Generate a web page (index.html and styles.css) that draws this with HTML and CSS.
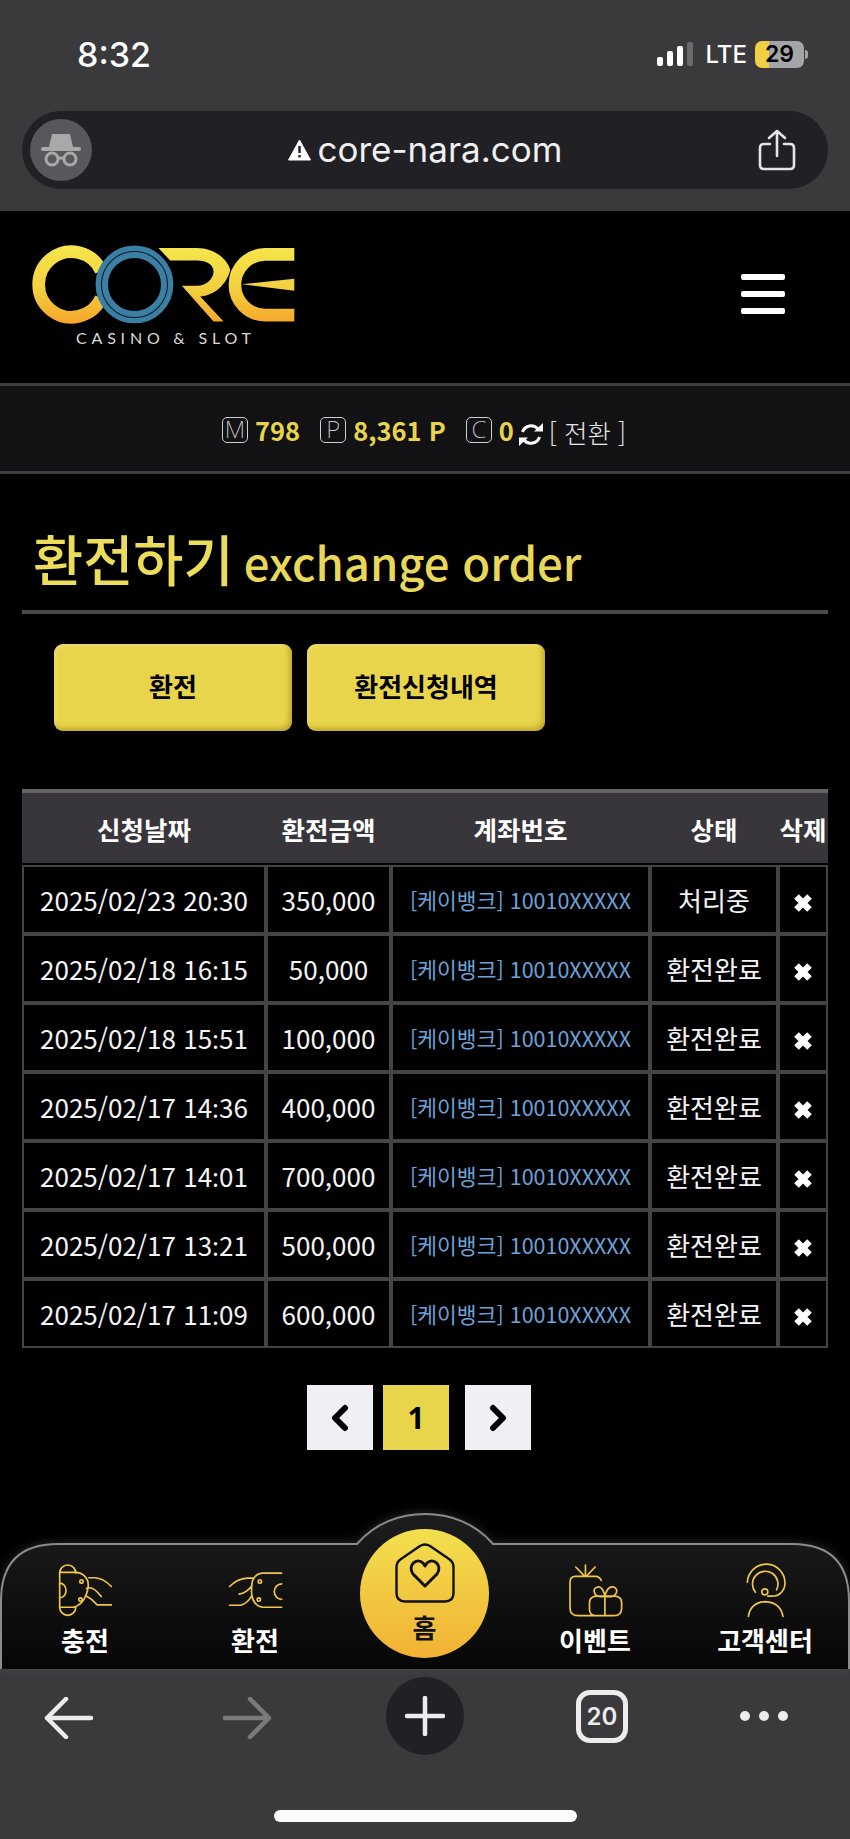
FILE: index.html
```html
<!DOCTYPE html>
<html lang="ko">
<head>
    <meta charset="UTF-8">
    <meta name="viewport" content="width=device-width, initial-scale=1.0">
    <title>core-nara.com</title>
    <link rel="stylesheet" href="styles.css">
</head>
<body>
<div class="phone">
    <div class="browser-top">
        <div class="status">
            <span class="clock">8:32</span>
            <div class="status-right">
                <div class="signal"><i></i><i></i><i></i><i class="off"></i></div>
                <span class="lte">LTE</span>
                <div class="battery"><span>29</span></div>
                <div class="battery-cap"></div>
            </div>
        </div>
        <div class="address">
            <div class="incognito">
                <svg width="42" height="38" viewBox="0 0 42 38" fill="none" stroke="#a9a9ab" stroke-width="3">
                    <path d="M9 16 L12 3 H30 L33 16 Z" fill="#a9a9ab" stroke="none"/>
                    <path d="M3 18 H39" stroke-linecap="round" stroke-width="4"/>
                    <circle cx="12" cy="28" r="6"/>
                    <circle cx="30" cy="28" r="6"/>
                    <path d="M18 27 H24"/>
                </svg>
            </div>
            <div class="url">
                <svg width="23" height="22" viewBox="0 0 23 22">
                    <path d="M11.5 1 L22.5 21 H.5 Z" fill="#fff" stroke="#fff" stroke-linejoin="round"/>
                    <path d="M11.5 7 V14 M11.5 16 V18.5" stroke="#212024" stroke-width="2.4"/>
                </svg>
                <span>core-nara.com</span>
            </div>
            <svg class="share" width="38" height="42" viewBox="0 0 38 42" fill="none" stroke="#e4e4e6" stroke-width="2.6" stroke-linecap="round" stroke-linejoin="round">
                <path d="M12 15 H6 Q2 15 2 19 V36 Q2 40 6 40 H32 Q36 40 36 36 V19 Q36 15 32 15 H26"/>
                <path d="M19 27 V2 M11 9 L19 2 L27 9"/>
            </svg>
        </div>
    </div>

    <div class="header">
        <svg class="logo" width="267" height="107" viewBox="90 70 800 320" fill="none">
            <defs>
                <linearGradient id="gold" gradientUnits="userSpaceOnUse" x1="0" y1="78" x2="0" y2="310">
                    <stop offset="0" stop-color="#f6e64c"/>
                    <stop offset=".55" stop-color="#f3d040"/>
                    <stop offset="1" stop-color="#f5a62b"/>
                </linearGradient>
            </defs>
            <path d="M303 153 A98 98 0 1 0 303 235" stroke="url(#gold)" stroke-width="38"/>
            <path d="M475 85 H590 C640 85 680 115 690 150 C680 195 640 228 600 230 L670 305 H640 L545 198 H590 C620 198 640 175 640 155 C640 135 620 122 590 122 H510 Z" fill="url(#gold)"/>
            <path d="M882 104 H795 A91 91 0 0 0 795 286 H882" stroke="url(#gold)" stroke-width="38"/>
            <path d="M725 193 L882 177 V213 Z" fill="url(#gold)"/>
            <circle cx="403" cy="194" r="98" stroke="#3b7fa4" stroke-width="37"/>
            <circle cx="403" cy="194" r="99" stroke="#0a1a24" stroke-width="3"/>
            <text class="logo-sub" x="228" y="372" textLength="524">CASINO &amp; SLOT</text>
        </svg>
        <div class="menu"><i></i><i></i><i></i></div>
    </div>

    <div class="wallet">
        <span class="badge">M</span><b class="amount">798</b>
        <span class="badge second">P</span><b class="amount">8,361 P</b>
        <span class="badge second">C</span><b class="amount">0</b>
        <svg class="refresh" width="24" height="23" viewBox="0 0 24 23" fill="none" stroke="#fff" stroke-width="3">
            <path d="M3.500 9 A9 9 0 0 1 19 6"/>
            <path d="M20.500 14 A9 9 0 0 1 5 17"/>
            <path d="M15 8.500 H24 V0 Z M9 14.500 H0 V23 Z" fill="#fff" stroke="none"/>
        </svg>
        <span class="convert">[ 전환 ]</span>
    </div>

    <div class="content">
        <h1 class="title">환전하기 <small>exchange order</small></h1>
        <div class="tabs">
            <a class="btn">환전</a>
            <a class="btn">환전신청내역</a>
        </div>

        <table class="list">
            <thead>
                <tr>
                    <th class="c-date">신청날짜</th>
                    <th class="c-amount">환전금액</th>
                    <th class="c-account">계좌번호</th>
                    <th class="c-state">상태</th>
                    <th class="c-del">삭제</th>
                </tr>
            </thead>
            <tbody>
                <tr><td>2025/02/23 20<span class="colon">:</span>30</td><td>350,000</td><td class="bank">[케이뱅크] 10010XXXXX</td><td>처리중</td><td><svg class="del" width="20" height="20" viewBox="0 0 20 20"><path d="M3.500 3.500 L16.500 16.500 M16.500 3.500 L3.500 16.500"/></svg></td></tr>
                <tr><td>2025/02/18 16<span class="colon">:</span>15</td><td>50,000</td><td class="bank">[케이뱅크] 10010XXXXX</td><td>환전완료</td><td><svg class="del" width="20" height="20" viewBox="0 0 20 20"><path d="M3.500 3.500 L16.500 16.500 M16.500 3.500 L3.500 16.500"/></svg></td></tr>
                <tr><td>2025/02/18 15<span class="colon">:</span>51</td><td>100,000</td><td class="bank">[케이뱅크] 10010XXXXX</td><td>환전완료</td><td><svg class="del" width="20" height="20" viewBox="0 0 20 20"><path d="M3.500 3.500 L16.500 16.500 M16.500 3.500 L3.500 16.500"/></svg></td></tr>
                <tr><td>2025/02/17 14<span class="colon">:</span>36</td><td>400,000</td><td class="bank">[케이뱅크] 10010XXXXX</td><td>환전완료</td><td><svg class="del" width="20" height="20" viewBox="0 0 20 20"><path d="M3.500 3.500 L16.500 16.500 M16.500 3.500 L3.500 16.500"/></svg></td></tr>
                <tr><td>2025/02/17 14<span class="colon">:</span>01</td><td>700,000</td><td class="bank">[케이뱅크] 10010XXXXX</td><td>환전완료</td><td><svg class="del" width="20" height="20" viewBox="0 0 20 20"><path d="M3.500 3.500 L16.500 16.500 M16.500 3.500 L3.500 16.500"/></svg></td></tr>
                <tr><td>2025/02/17 13<span class="colon">:</span>21</td><td>500,000</td><td class="bank">[케이뱅크] 10010XXXXX</td><td>환전완료</td><td><svg class="del" width="20" height="20" viewBox="0 0 20 20"><path d="M3.500 3.500 L16.500 16.500 M16.500 3.500 L3.500 16.500"/></svg></td></tr>
                <tr><td>2025/02/17 11<span class="colon">:</span>09</td><td>600,000</td><td class="bank">[케이뱅크] 10010XXXXX</td><td>환전완료</td><td><svg class="del" width="20" height="20" viewBox="0 0 20 20"><path d="M3.500 3.500 L16.500 16.500 M16.500 3.500 L3.500 16.500"/></svg></td></tr>
            </tbody>
        </table>

        <div class="pager">
            <a class="page-btn"><svg width="20" height="28" viewBox="0 0 20 28" fill="none" stroke="#000" stroke-width="6" stroke-linecap="round" stroke-linejoin="round"><path d="M15 4 L5 14 L15 24"/></svg></a>
            <a class="page-btn current">1</a>
            <a class="page-btn next"><svg width="20" height="28" viewBox="0 0 20 28" fill="none" stroke="#000" stroke-width="6" stroke-linecap="round" stroke-linejoin="round"><path d="M5 4 L15 14 L5 24"/></svg></a>
        </div>
    </div>

    <div class="tabbar">
        <svg class="tabbar-bg" width="850" height="156" viewBox="0 0 850 156">
            <defs>
                <linearGradient id="barfill" x1="0" y1="0" x2="0" y2="1">
                    <stop offset="0" stop-color="#1d1d1e"/>
                    <stop offset="1" stop-color="#060606"/>
                </linearGradient>
            </defs>
            <path d="M1 156 V88 Q1 31 58 31 H357 C375 10 400 1 425 1 C450 1 475 10 493 31 H792 Q849 31 849 88 V156" fill="url(#barfill)" stroke="#8b8b8c" stroke-width="2"/>
        </svg>
        <a class="tab">
            <svg class="tab-icon" width="57" height="57" viewBox="170 185 170 170">
                <path d="M178 218 A24 24 0 0 1 226 218 M178 320 A24 24 0 0 0 226 320 M178 215 V322 M178 216 H228 Q252 218 262 242 Q266 262 256 285 Q246 312 220 320 H178 M178 248 A19 22 0 0 1 178 292 M265 232 H285 Q310 235 332 258 M258 264 Q276 254 302 288 M255 285 Q275 295 290 313 H332"/>
                <circle cx="243" cy="243" r="5"/><circle cx="240" cy="297" r="5"/>
            </svg>
            <span>충전</span>
        </a>
        <a class="tab">
            <svg class="tab-icon" width="57" height="57" viewBox="680 185 170 170">
                <path d="M843 218 H785 Q762 220 755 245 Q752 265 754 285 Q760 315 785 320 H843 M843 250 A22 23 0 1 0 843 296 M688 258 Q710 235 740 233 H756 M716 281 Q738 278 754 256 M688 314 H722 Q745 305 754 285"/>
                <circle cx="778" cy="243" r="5"/><circle cx="775" cy="297" r="5"/>
            </svg>
            <span>환전</span>
        </a>
        <a class="tab home-slot"></a>
        <a class="tab">
            <svg class="tab-icon" width="57" height="57" viewBox="425 185 170 170">
                <path d="M480 194 V228 M451 200 L478 228 M509 200 L482 228 M527 240 Q522 228 510 228 H450 Q434 228 434 245 V322 Q434 345 458 345 H566 Q588 345 588 322 V308 Q588 288 568 287 H512 Q492 288 492 308 V325 Q492 345 512 345 M538 287 V345 M538 287 C505 295 495 262 518 259 Q532 258 538 287 C545 258 558 258 566 260 C582 268 572 295 538 287"/>
            </svg>
            <span>이벤트</span>
        </a>
        <a class="tab">
            <svg class="tab-icon" width="57" height="57" viewBox="935 185 170 170">
                <path d="M966 245 A56 56 0 0 1 1078 250 A38 38 0 0 1 1040 287 H1027 M990 275 A38 38 0 1 1 1053 268 M969 347 Q975 306 1020 303 Q1065 306 1072 347"/>
                <circle cx="1018" cy="274" r="9"/>
            </svg>
            <span>고객센터</span>
        </a>
        <a class="home">
            <svg width="60" height="60" viewBox="0 0 60 60" fill="none" stroke="#111" stroke-width="2.400" stroke-linejoin="round">
                <path d="M25 3 Q30 0 35 3 L54 16 Q58.500 19 58.500 24 V50 Q58.500 58.500 50 58.500 H10 Q1.500 58.500 1.500 50 V24 Q1.500 19 6 16 Z"/>
                <path d="M30 43 L18 31 C12 22 22 14 28 20 L30 23 L32 20 C38 14 48 22 42 31 Z" stroke-width="3"/>
            </svg>
            <span>홈</span>
        </a>
    </div>

    <div class="browser-bottom">
        <div class="toolbar">
            <svg width="50" height="42" viewBox="0 0 50 42" fill="none" stroke="#ececee" stroke-width="4.500" stroke-linecap="round" stroke-linejoin="round"><path d="M47 21 H3 M22 2 L3 21 L22 40"/></svg>
            <svg class="fwd" width="50" height="42" viewBox="0 0 50 42" fill="none" stroke="#7a7a7c" stroke-width="4.500" stroke-linecap="round" stroke-linejoin="round"><path d="M3 21 H47 M28 2 L47 21 L28 40"/></svg>
            <div class="new-tab"><svg width="40" height="40" viewBox="0 0 40 40" stroke="#ececee" stroke-width="4.500" stroke-linecap="round"><path d="M20 2 V38 M2 20 H38"/></svg></div>
            <div class="tab-count">20</div>
            <div class="dots"><i></i><i></i><i></i></div>
        </div>
        <div class="home-bar"></div>
    </div>
</div>
</body>
</html>
```

FILE: styles.css
```css
*{
    box-sizing:border-box;
}

body{
    margin:0;
    background:#000;
    color:#fff;
    font-family:"Noto Sans CJK KR","Noto Sans",sans-serif;
}

a{
    display:block;
}

.phone
{
    width:850px;
    height:1839px;
    display:flex;
    flex-direction:column;
    overflow:hidden;
}

/* browser chrome */
.browser-top
{
    height:211px;
    background:#3a393b;
    padding:38px 22px 0;
}
.status
{
    height:32px;
    display:flex;
    align-items:center;
    justify-content:space-between;
    padding:0 20px 0 55px;
    font-family:Inter,sans-serif;
}
.clock
{
    font-size:34px;
    font-weight:500;
}
.status-right
{
    display:flex;
    align-items:center;
}
.signal
{
    display:flex;
    align-items:flex-end;
    gap:4px;
    height:24px;
    margin-right:13px;
}
.signal i
{
    width:6px;
    background:#fff;
    border-radius:2px;
}
.signal i:nth-child(1){height:9px;}
.signal i:nth-child(2){height:15px;}
.signal i:nth-child(3){height:20px;}
.signal i:nth-child(4){height:24px;background:#6a6a6c;}
.lte
{
    font-size:24px;
    font-weight:500;
    margin-right:8px;
}
.battery
{
    width:49px;
    height:27px;
    border-radius:7px;
    background:linear-gradient(90deg,#f1cf45 29%,#a5a5a7 29%);
    color:#000;
    font-size:23px;
    font-weight:600;
    text-align:center;
    line-height:27px;
}
.battery-cap
{
    width:3px;
    height:9px;
    margin-left:1px;
    background:#a5a5a7;
    border-radius:0 3px 3px 0;
}

.address
{
    height:78px;
    margin-top:41px;
    background:#212024;
    border-radius:39px;
    display:flex;
    align-items:center;
    padding:0 32px 0 8px;
    position:relative;
}
.incognito
{
    width:62px;
    height:62px;
    border-radius:50%;
    background:#58585c;
    display:flex;
    align-items:center;
    justify-content:center;
}
.url
{
    flex:1;
    display:flex;
    align-items:center;
    justify-content:center;
    gap:7px;
    font-family:Inter,sans-serif;
    font-size:35px;
    color:#f0f0f2;
}
.url span
{
    position:relative;
    top:-1px;
}

/* site header */
.header
{
    height:172px;
    background:#000;
    display:flex;
    align-items:flex-start;
    justify-content:space-between;
    padding:32px 65px 0 30px;
}
.logo-sub
{
    font-family:Lato,sans-serif;
    font-size:48px;
    fill:#d9d9d9;
}
.menu
{
    width:44px;
    margin-top:31px;
    display:flex;
    flex-direction:column;
    gap:11px;
}
.menu i
{
    height:6px;
    background:#fff;
    border-radius:2px;
}

.wallet
{
    height:91px;
    background:#121214;
    border-top:3px solid #3e3e40;
    border-bottom:3px solid #3e3e40;
    display:flex;
    align-items:center;
    padding:3px 0 0 222px;
}
.badge
{
    width:26px;
    height:26px;
    border:1.500px solid #cfcfcf;
    border-radius:5px;
    color:#cfcfcf;
    font-family:"Noto Sans",sans-serif;
    font-size:24px;
    font-weight:200;
    line-height:22px;
    text-align:center;
    margin-right:7px;
}
.badge.second
{
    margin-left:20px;
}
.amount
{
    color:#e8d44d;
    font-size:25.500px;
    font-weight:700;
    line-height:30px;
}
.refresh
{
    margin:8px 6px 0 5px;
}
.convert
{
    font-size:25.500px;
    font-weight:300;
    color:#e6e6e6;
    line-height:30px;
    margin-top:3px;
}

/* page body */
.content
{
    flex:1;
    padding:0 22px;
}
.title
{
    margin:54px 0 0;
    height:86px;
    border-bottom:4px solid #4a484b;
    color:#ecdc5c;
    font-size:54.500px;
    font-weight:500;
    line-height:60px;
    padding-left:11px;
    white-space:nowrap;
}
.title small
{
    font-size:45.500px;
    font-weight:500;
    color:#e8d85a;
    margin-left:-5px;
}

.tabs
{
    display:flex;
    gap:15px;
    padding:30px 0 0 32px;
}
.btn
{
    width:238px;
    height:87px;
    border-radius:9px;
    background:#e9d54c;
    box-shadow:inset -3px -3px 5px rgba(150,110,0,.45),inset 2px 2px 3px rgba(255,255,255,.2);
    color:#000;
    font-size:26px;
    font-weight:700;
    line-height:84px;
    text-align:center;
}

.list
{
    width:806px;
    margin-top:58px;
    table-layout:fixed;
    border-collapse:separate;
    border-spacing:0;
    font-size:26px;
}
.list th
{
    height:76px;
    background:#38363a;
    background-clip:padding-box;
    border-top:4px solid #666467;
    border-bottom:2px solid #000;
    font-weight:700;
    font-size:25.500px;
    padding:0;
}
.c-date{width:244px;}
.c-amount{width:125px;}
.c-account{width:259px;}
.c-state{width:128px;}
.c-del{width:50px;}
.list td
{
    height:69px;
    border:2px solid #454346;
    text-align:center;
    padding:0;
    color:#f4f4f4;
    white-space:nowrap;
}
.list td.bank
{
    color:#6da2d8;
    font-size:21.500px;
}
.colon
{
    font-family:"Noto Sans",sans-serif;
}
.del
{
    display:block;
    margin:6px auto 0;
    stroke:#fff;
    stroke-width:6.500;
    fill:none;
}

.pager
{
    display:flex;
    padding:37px 0 0 285px;
}
.page-btn
{
    width:66px;
    height:65px;
    background:#f0eff4;
    display:flex;
    align-items:center;
    justify-content:center;
    color:#000;
    font-family:"Noto Sans",sans-serif;
    font-size:30px;
    font-weight:700;
}
.page-btn.current
{
    background:#e9d54c;
    margin:0 16px 0 10px;
}

/* bottom tab menu */
.tabbar
{
    height:156px;
    position:relative;
    padding-top:49px;
    display:grid;
    grid-template-columns:repeat(5,170px);
}
.tabbar-bg
{
    position:absolute;
    left:0;
    top:0;
    filter:drop-shadow(0 -1px 5px rgba(255,255,255,.14));
}
.tab
{
    position:relative;
    display:flex;
    flex-direction:column;
    align-items:center;
    font-size:26px;
    font-weight:700;
    line-height:30px;
}
.tab span
{
    margin-top:6px;
}
.tab-icon
{
    fill:none;
    stroke:#f0c74a;
    stroke-width:5;
    stroke-linecap:round;
    stroke-linejoin:round;
}
.home
{
    position:absolute;
    left:360px;
    top:16px;
    width:129px;
    height:129px;
    border-radius:50%;
    background:linear-gradient(180deg,#f2e04e,#f2b134);
    display:flex;
    flex-direction:column;
    align-items:center;
    padding-top:14px;
    color:#111;
    font-size:26px;
    font-weight:700;
    line-height:30px;
}
.home span
{
    margin-top:9px;
}

.browser-bottom
{
    height:170px;
    background:#3a393b;
}
.toolbar
{
    height:141px;
    padding:8px 0 0 44px;
    display:flex;
    align-items:flex-start;
}
.toolbar svg
{
    display:block;
}
.toolbar > svg
{
    margin-top:20px;
}
.fwd
{
    margin-left:128px;
}
.new-tab
{
    width:78px;
    height:78px;
    margin-left:114px;
    border-radius:50%;
    background:#212024;
    display:flex;
    align-items:center;
    justify-content:center;
}
.tab-count
{
    width:52px;
    height:53px;
    margin:13px 0 0 112px;
    border:5px solid #ececee;
    border-radius:14px;
    color:#ececee;
    font-family:Inter,sans-serif;
    font-size:24px;
    font-weight:600;
    line-height:43px;
    text-align:center;
}
.dots
{
    display:flex;
    gap:9px;
    margin:34px 0 0 112px;
}
.dots i
{
    width:10px;
    height:10px;
    border-radius:50%;
    background:#ececee;
}
.home-bar
{
    width:303px;
    height:12px;
    margin-left:274px;
    background:#fbfafd;
    border-radius:6px;
}
```
